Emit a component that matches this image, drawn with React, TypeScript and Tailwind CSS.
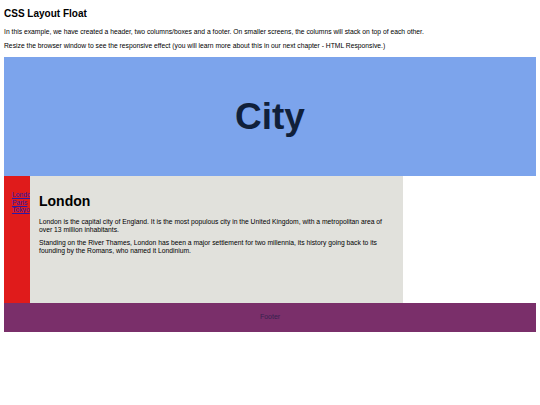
export default function App() {
  return (
    <div className="min-h-screen bg-white px-[4px] pt-[8px] font-['Liberation_Sans',Arial,sans-serif] text-black">
      <h2 className="text-[10px] font-bold leading-[12px]">CSS Layout Float</h2>
      <p className="mt-[8px] text-[6.75px] leading-[8px]">
        In this example, we have created a header, two columns/boxes and a footer. On smaller screens, the columns will stack on top of each other.
      </p>
      <p className="mt-[6px] text-[6.75px] leading-[8px]">
        Resize the browser window to see the responsive effect (you will learn more about this in our next chapter - HTML Responsive.)
      </p>

      <header className="mt-[7px] flex h-[119px] items-center justify-center bg-[#7ca4ec]">
        <h2 className="text-[37px] font-bold leading-none text-[#10203a]">City</h2>
      </header>

      <section className="flex h-[127px]">
        <nav className="w-[26px] overflow-hidden bg-[#e01b1b] pl-[8px] pt-[15px]">
          <ul className="text-[6.75px] leading-[7.5px]">
            <li><a href="#" className="whitespace-nowrap text-[#2a1aa8] underline">London</a></li>
            <li><a href="#" className="whitespace-nowrap text-[#2a1aa8] underline">Paris</a></li>
            <li><a href="#" className="whitespace-nowrap text-[#2a1aa8] underline">Tokyo</a></li>
          </ul>
        </nav>
        <article className="w-[373px] bg-[#e1e1dc] px-[9px] pt-[17px]">
          <h1 className="text-[14px] font-bold leading-[16px]">London</h1>
          <p className="mt-[9px] text-[6.75px] leading-[8.3px]">
            London is the capital city of England. It is the most populous city in the United Kingdom, with a metropolitan area of over 13 million inhabitants.
          </p>
          <p className="mt-[4.5px] text-[6.75px] leading-[8.3px]">
            Standing on the River Thames, London has been a major settlement for two millennia, its history going back to its founding by the Romans, who named it Londinium.
          </p>
        </article>
      </section>

      <footer className="flex h-[29px] items-center justify-center bg-[#7a2f6a] text-[7px] text-[#35224f]">
        <p>Footer</p>
      </footer>
    </div>
  );
}
